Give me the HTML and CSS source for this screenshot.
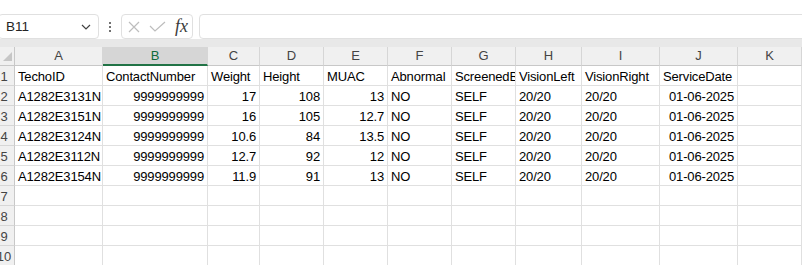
FILE: index.html
```html
<!DOCTYPE html>
<html lang="en">
<head>
    <meta charset="UTF-8">
    <title>Feuille - Book1</title>
    <link rel="stylesheet" href="styles.css">
</head>
<body>
    <div class="formula-bar">
        <div class="name-box">
            <span>B11</span>
            <svg class="chevron" width="10" height="6" viewBox="0 0 10 6">
                <polyline points="1,1 5,5 9,1" fill="none" stroke="#424242" stroke-width="1.2"/>
            </svg>
        </div>
        <div class="more"><i></i><i></i><i></i></div>
        <div class="fx-box">
            <svg width="12" height="12" viewBox="0 0 12 12">
                <path d="M1 1 L11 11 M11 1 L1 11" stroke="#bdbdbd" stroke-width="1.2" fill="none"/>
            </svg>
            <svg width="17" height="11" viewBox="0 0 17 11">
                <polyline points="1,5 6,10 16,1" stroke="#bdbdbd" stroke-width="1.2" fill="none"/>
            </svg>
            <span class="fx">fx</span>
        </div>
        <div class="formula-input"></div>
    </div>
    <div class="band"></div>

    <div class="sheet">
        <div class="hd corner"><span class="tri"></span></div>
        <div class="hd">A</div>
        <div class="hd active">B</div>
        <div class="hd">C</div>
        <div class="hd">D</div>
        <div class="hd">E</div>
        <div class="hd">F</div>
        <div class="hd">G</div>
        <div class="hd">H</div>
        <div class="hd">I</div>
        <div class="hd">J</div>
        <div class="hd">K</div>

        <div class="rn"><span>1</span></div>
        <div class="c">TechoID</div>
        <div class="c">ContactNumber</div>
        <div class="c">Weight</div>
        <div class="c">Height</div>
        <div class="c">MUAC</div>
        <div class="c">Abnormal</div>
        <div class="c">ScreenedBy</div>
        <div class="c">VisionLeft</div>
        <div class="c">VisionRight</div>
        <div class="c">ServiceDate</div>
        <div class="c"></div>

        <div class="rn"><span>2</span></div>
        <div class="c">A1282E3131N</div>
        <div class="c num">9999999999</div>
        <div class="c num">17</div>
        <div class="c num">108</div>
        <div class="c num">13</div>
        <div class="c">NO</div>
        <div class="c">SELF</div>
        <div class="c">20/20</div>
        <div class="c">20/20</div>
        <div class="c num">01-06-2025</div>
        <div class="c"></div>

        <div class="rn"><span>3</span></div>
        <div class="c">A1282E3151N</div>
        <div class="c num">9999999999</div>
        <div class="c num">16</div>
        <div class="c num">105</div>
        <div class="c num">12.7</div>
        <div class="c">NO</div>
        <div class="c">SELF</div>
        <div class="c">20/20</div>
        <div class="c">20/20</div>
        <div class="c num">01-06-2025</div>
        <div class="c"></div>

        <div class="rn"><span>4</span></div>
        <div class="c">A1282E3124N</div>
        <div class="c num">9999999999</div>
        <div class="c num">10.6</div>
        <div class="c num">84</div>
        <div class="c num">13.5</div>
        <div class="c">NO</div>
        <div class="c">SELF</div>
        <div class="c">20/20</div>
        <div class="c">20/20</div>
        <div class="c num">01-06-2025</div>
        <div class="c"></div>

        <div class="rn"><span>5</span></div>
        <div class="c">A1282E3112N</div>
        <div class="c num">9999999999</div>
        <div class="c num">12.7</div>
        <div class="c num">92</div>
        <div class="c num">12</div>
        <div class="c">NO</div>
        <div class="c">SELF</div>
        <div class="c">20/20</div>
        <div class="c">20/20</div>
        <div class="c num">01-06-2025</div>
        <div class="c"></div>

        <div class="rn"><span>6</span></div>
        <div class="c">A1282E3154N</div>
        <div class="c num">9999999999</div>
        <div class="c num">11.9</div>
        <div class="c num">91</div>
        <div class="c num">13</div>
        <div class="c">NO</div>
        <div class="c">SELF</div>
        <div class="c">20/20</div>
        <div class="c">20/20</div>
        <div class="c num">01-06-2025</div>
        <div class="c"></div>

        <div class="rn"><span>7</span></div>
        <div class="c"></div><div class="c"></div><div class="c"></div><div class="c"></div><div class="c"></div>
        <div class="c"></div><div class="c"></div><div class="c"></div><div class="c"></div><div class="c"></div><div class="c"></div>

        <div class="rn"><span>8</span></div>
        <div class="c"></div><div class="c"></div><div class="c"></div><div class="c"></div><div class="c"></div>
        <div class="c"></div><div class="c"></div><div class="c"></div><div class="c"></div><div class="c"></div><div class="c"></div>

        <div class="rn"><span>9</span></div>
        <div class="c"></div><div class="c"></div><div class="c"></div><div class="c"></div><div class="c"></div>
        <div class="c"></div><div class="c"></div><div class="c"></div><div class="c"></div><div class="c"></div><div class="c"></div>

        <div class="rn"><span>10</span></div>
        <div class="c"></div><div class="c"></div><div class="c"></div><div class="c"></div><div class="c"></div>
        <div class="c"></div><div class="c"></div><div class="c"></div><div class="c"></div><div class="c"></div><div class="c"></div>
    </div>
</body>
</html>
```

FILE: styles.css
```css
body {
    margin: 0;
    width: 802px;
    height: 265px;
    overflow: hidden;
    background: #fff;
    font-family: "Liberation Sans", Arial, sans-serif;
}
.formula-bar {
    display: flex;
    height: 25px;
    padding-top: 14px;
    background: #fff;
}
.name-box,
.fx-box,
.formula-input {
    box-sizing: border-box;
    border: 1px solid #e0e0e0;
    border-radius: 4px;
    background: #fff;
}
.name-box {
    width: 101px;
    margin-left: -2px;
    display: flex;
    align-items: center;
    justify-content: space-between;
    padding: 0 7px 0 7px;
    font-size: 13.5px;
    color: #242424;
}
.more {
    width: 22px;
    display: flex;
    flex-direction: column;
    align-items: center;
    justify-content: center;
    gap: 2px;
}
.more i {
    width: 2px;
    height: 2px;
    background: #424242;
    border-radius: 1px;
}
.fx-box {
    width: 72px;
    display: flex;
    align-items: center;
    padding: 0 0 0 6px;
}
.fx-box svg {
    margin-right: 9px;
}
.fx {
    font-family: "Liberation Serif", "Times New Roman", serif;
    font-style: italic;
    font-size: 18px;
    color: #3b3b3b;
}
.formula-input {
    flex: 1;
    margin-left: 6px;
    margin-right: -10px;
}
.band {
    height: 8px;
    background: #e8e8e8;
}
.sheet {
    display: grid;
    grid-template-columns: 15px 88px 105px 52px 64px 64px 64px 64px 66px 78px 78px 64px;
    grid-template-rows: 19px;
    grid-auto-rows: 20px;
}
.hd {
    box-sizing: border-box;
    background: #f0f0f0;
    border-right: 1px solid #d6d6d6;
    border-bottom: 1px solid #c8c8c8;
    text-align: center;
    font-size: 13px;
    line-height: 18px;
    color: #444;
}
.hd.active {
    background: #d6d6d6;
    color: #0f6b3b;
    border-bottom: 2px solid #217346;
}
.corner {
    display: flex;
    align-items: flex-end;
    justify-content: flex-end;
    padding: 0 2px 4px 0;
    border-right-color: #c8c8c8;
}
.tri {
    width: 0;
    height: 0;
    border-left: 9px solid transparent;
    border-bottom: 9px solid #c6c6c6;
}
.rn {
    box-sizing: border-box;
    background: #f0f0f0;
    border-right: 1px solid #c8c8c8;
    border-bottom: 1px solid #d6d6d6;
    overflow: hidden;
    font-size: 13px;
    color: #444;
    padding-top: 3px;
    line-height: 16px;
}
.rn span {
    display: block;
    width: 22px;
    margin-left: -7px;
    text-align: center;
}
.c {
    box-sizing: border-box;
    border-right: 1px solid #e0e0e0;
    border-bottom: 1px solid #e0e0e0;
    padding: 3px 3px 0 3px;
    font-size: 13px;
    line-height: 16px;
    letter-spacing: -0.15px;
    color: #000;
    white-space: nowrap;
    overflow: hidden;
}
.num {
    text-align: right;
}
```
